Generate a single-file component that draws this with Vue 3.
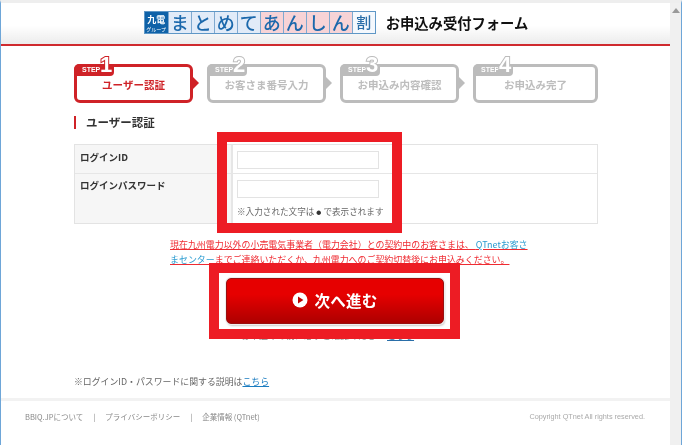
<script setup>
const cells = [
  { t: 'ま', c: 'blue' }, { t: 'と', c: 'blue' }, { t: 'め', c: 'blue' }, { t: 'て', c: 'blue' },
  { t: 'あ', c: 'pink' }, { t: 'ん', c: 'pink' }, { t: 'し', c: 'pink' }, { t: 'ん', c: 'pink' },
  { t: '割', c: 'white' }
]
const steps = [
  { n: 1, label: 'ユーザー認証', active: true },
  { n: 2, label: 'お客さま番号入力' },
  { n: 3, label: 'お申込み内容確認' },
  { n: 4, label: 'お申込み完了', last: true }
]
</script>

<template>
  <div class="page">
    <div class="content">
      <header class="head">
        <div class="logo">
          <div class="brand"><b>九電</b><small>グループ</small></div>
          <span v-for="(c, i) in cells" :key="i" class="cell" :class="c.c">{{ c.t }}</span>
        </div>
        <h1 class="title">お申込み受付フォーム</h1>
      </header>

      <main class="main">
        <ol class="steps">
          <li v-for="s in steps" :key="s.n" class="step" :class="{ on: s.active, wide: s.last }">
            <span class="tab"><i>STEP</i><em>{{ s.n }}</em></span>
            {{ s.label }}
          </li>
        </ol>

        <h2 class="section">ユーザー認証</h2>

        <div class="form">
          <div class="label r1">ログインID</div>
          <div class="field r1"><input class="inp" type="text" /></div>
          <div class="label">ログインパスワード</div>
          <div class="field">
            <input class="inp" type="password" />
            <p class="hint">※入力された文字は<span class="dot">●</span>で表示されます</p>
          </div>
        </div>

        <p class="warn">現在九州電力以外の小売電気事業者（電力会社）との契約中のお客さまは、 <a>QTnetお客さ<br />まセンター</a>までご連絡いただくか、九州電力へのご契約切替後にお申込みください。</p>

        <button class="next" type="button">
          <svg width="16" height="16" viewBox="0 0 16 16"><circle cx="8" cy="8" r="7.5" fill="#fff" /><path d="M6 4.6 11.4 8 6 11.4z" fill="#c00000" /></svg>
          次へ進む
        </button>

        <p class="hidden-line">お申込みの前に必ずご確認ください <a>こちら</a></p>

        <p class="about">※ログインID・パスワードに関する説明は<a>こちら</a></p>
      </main>

      <footer class="foot">
        <nav class="links">
          <span>BBIQ.JPについて</span><span>|</span><span>プライバシーポリシー</span><span>|</span><span>企業情報 (QTnet)</span>
        </nav>
        <span class="copy">Copyright QTnet All rights reserved.</span>
      </footer>

      <div class="mark mark-a"></div>
      <div class="mark mark-b"></div>
    </div>
    <div class="bar"><span class="up"></span></div>
  </div>
</template>

<style scoped>
.page {
  position: relative;
  box-sizing: border-box;
  width: 682px;
  height: 445px;
  display: flex;
  overflow: hidden;
  background: #fff;
  border-left: 1px solid #6ea6d8;
  border-right: 1px solid #6ea6d8;
  border-top: 3px solid #eeeeee;
  font-family: "Noto Sans CJK JP", "Liberation Sans", sans-serif;
  filter: blur(0.4px);
}
.content { position: relative; width: 669px; flex: none; }
.bar { flex: 1; background: #f0f0f0; display: flex; justify-content: center; }
.up { width: 0; height: 0; margin-top: 5px; border: 4px solid transparent; border-top: 0; border-bottom: 5px solid #9a9a9a; }

.head {
  box-sizing: border-box;
  height: 43px;
  display: flex;
  align-items: center;
  justify-content: center;
  gap: 10px;
  padding-left: 1px;
  padding-bottom: 2px;
  background: linear-gradient(#fff 55%, #ececec);
  border-bottom: 2px solid #cf2a2e;
}
.logo { display: flex; height: 23px; border: 1px solid #5f97c6; box-sizing: border-box; }
.brand {
  width: 23px;
  background: #0f62a8;
  color: #fff;
  display: flex;
  flex-direction: column;
  align-items: center;
  justify-content: center;
  line-height: 1;
}
.brand b { font-size: 9px; line-height: 11px; }
.brand small { font-size: 5px; line-height: 7px; }
.cell {
  width: 23px;
  box-sizing: border-box;
  border-left: 1px solid #7fa9d0;
  text-align: center;
  font-size: 18px;
  font-weight: 500;
  line-height: 20px;
  color: #1b68ac;
}
.cell.blue { background: #e1ebf8; }
.cell.pink { background: #f7d3d6; }
.cell.white { background: #f4f8fd; font-size: 15px; color: #2a6ea8; }
.title { margin: 0; font-size: 14.3px; line-height: 20px; font-weight: 700; color: #111; white-space: nowrap; }

.main { box-sizing: border-box; padding: 0 0 0 73px; width: 597px; height: 352px; }
.steps { list-style: none; margin: 0; padding: 18px 0 0; display: flex; gap: 14px; }
.step {
  position: relative;
  box-sizing: border-box;
  width: 119px;
  height: 39px;
  padding-top: 10px;
  border: 3px solid #bcbcbc;
  border-radius: 6px;
  text-align: center;
  font-size: 10.5px;
  line-height: 16px;
  font-weight: 700;
  color: #bdbdbd;
  white-space: nowrap;
}
.step.wide { width: 125px; }
.step.on { border-color: #cf2227; color: #cf2227; }
.step::after {
  content: "";
  position: absolute;
  right: -9px;
  top: 10px;
  border-left: 6px solid #bcbcbc;
  border-top: 6px solid transparent;
  border-bottom: 6px solid transparent;
}
.step.wide::after { display: none; }
.step.on::after { border-left-color: #cf2227; }
.tab {
  position: absolute;
  left: -3px;
  top: -3px;
  width: 40px;
  height: 12px;
  background: #bcbcbc;
  border-radius: 5px 0 4px 0;
  display: flex;
  align-items: center;
}
.on .tab { background: #cf2227; }
.tab i { font-style: normal; font-size: 7px; line-height: 12px; color: #fff; padding-left: 8px; width: 26px; box-sizing: border-box; font-family: "Liberation Sans", sans-serif; font-weight: 700; }
.tab em {
  position: absolute;
  left: 26px;
  top: -10px;
  font-style: normal;
  font-family: "Liberation Sans", sans-serif;
  font-size: 22px;
  line-height: 22px;
  font-weight: 700;
  color: #fff;
  -webkit-text-stroke: 2px #bcbcbc;
  paint-order: stroke fill;
}
.on .tab em { -webkit-text-stroke-color: #cf2227; }

.section {
  margin: 13px 0 0;
  height: 13px;
  padding-left: 10px;
  border-left: 2px solid #cf2227;
  font-size: 11.5px;
  line-height: 13px;
  font-weight: 700;
  color: #333;
}
.form {
  box-sizing: border-box;
  margin-top: 15px;
  width: 524px;
  height: 80px;
  display: grid;
  grid-template-columns: 158px 1fr;
  grid-template-rows: 29px 1fr;
  border: 1.5px solid #e3e3e3;
}
.label {
  background: #f6f6f6;
  border-right: 2px solid #e6e6e6;
  padding: 5px 0 0 5px;
  font-size: 9.5px;
  line-height: 14px;
  font-weight: 700;
  color: #333;
}
.label:not(.r1) { padding-top: 4px; }
.r1 { border-bottom: 1.5px solid #e6e6e6; }
.field { padding: 6px 0 0 4px; }
.inp {
  display: block;
  box-sizing: border-box;
  width: 142px;
  height: 18px;
  padding: 0;
  border: 1.5px solid #e3e3e3;
  background: #fff;
  outline: none;
}
.hint { margin: 7px 0 0; font-size: 8.6px; line-height: 12px; color: #666; white-space: nowrap; }
.dot { font-size: 5px; color: #333; vertical-align: 1px; padding: 0 2px; }

.warn {
  margin: 13px 0 0;
  padding-left: 96px;
  width: 370px;
  font-size: 8.95px;
  line-height: 15px;
  color: #ef2b32;
  text-decoration: underline;
  white-space: nowrap;
}
.warn a { color: #2a9bd0; }

.next {
  display: flex;
  align-items: center;
  justify-content: center;
  gap: 7px;
  box-sizing: border-box;
  margin: 11px 0 0 152px;
  width: 218px;
  height: 46px;
  padding: 0 1px 2px 0;
  border: 1px solid #9a1010;
  border-radius: 5px;
  background: linear-gradient(#e60000 35%, #ad0000);
  box-shadow: 0 0 0 1px #eee, 1px 2px 2px #ccc;
  color: #fff;
  font-family: inherit;
  font-size: 15.5px;
  font-weight: 700;
  letter-spacing: 0.2px;
}
.hidden-line {
  margin: 5px 0 0 167px;
  font-size: 9px;
  line-height: 14px;
  color: #888;
  white-space: nowrap;
}
.hidden-line a { color: #2a6ea8; text-decoration: underline; }
.about { margin: 32px 0 0; font-size: 8.9px; line-height: 14px; color: #666; white-space: nowrap; }
.about a { color: #1b7cc0; text-decoration: underline; }

.foot {
  box-sizing: border-box;
  height: 47px;
  border-top: 3px solid #f2f2f2;
  display: flex;
  justify-content: space-between;
  align-items: flex-start;
  padding: 10px 25px 0 24px;
  font-size: 7.5px;
  line-height: 12px;
  color: #888;
}
.links { display: flex; gap: 10px; }
.copy { font-family: "Liberation Sans", sans-serif; font-size: 7.3px; color: #aaa; }

.mark { position: absolute; box-sizing: border-box; border: 10px solid #ed1c24; }
.mark-a { left: 216px; top: 129px; width: 185px; height: 101px; }
.mark-b { left: 208px; top: 260px; width: 251px; height: 76px; }
</style>
